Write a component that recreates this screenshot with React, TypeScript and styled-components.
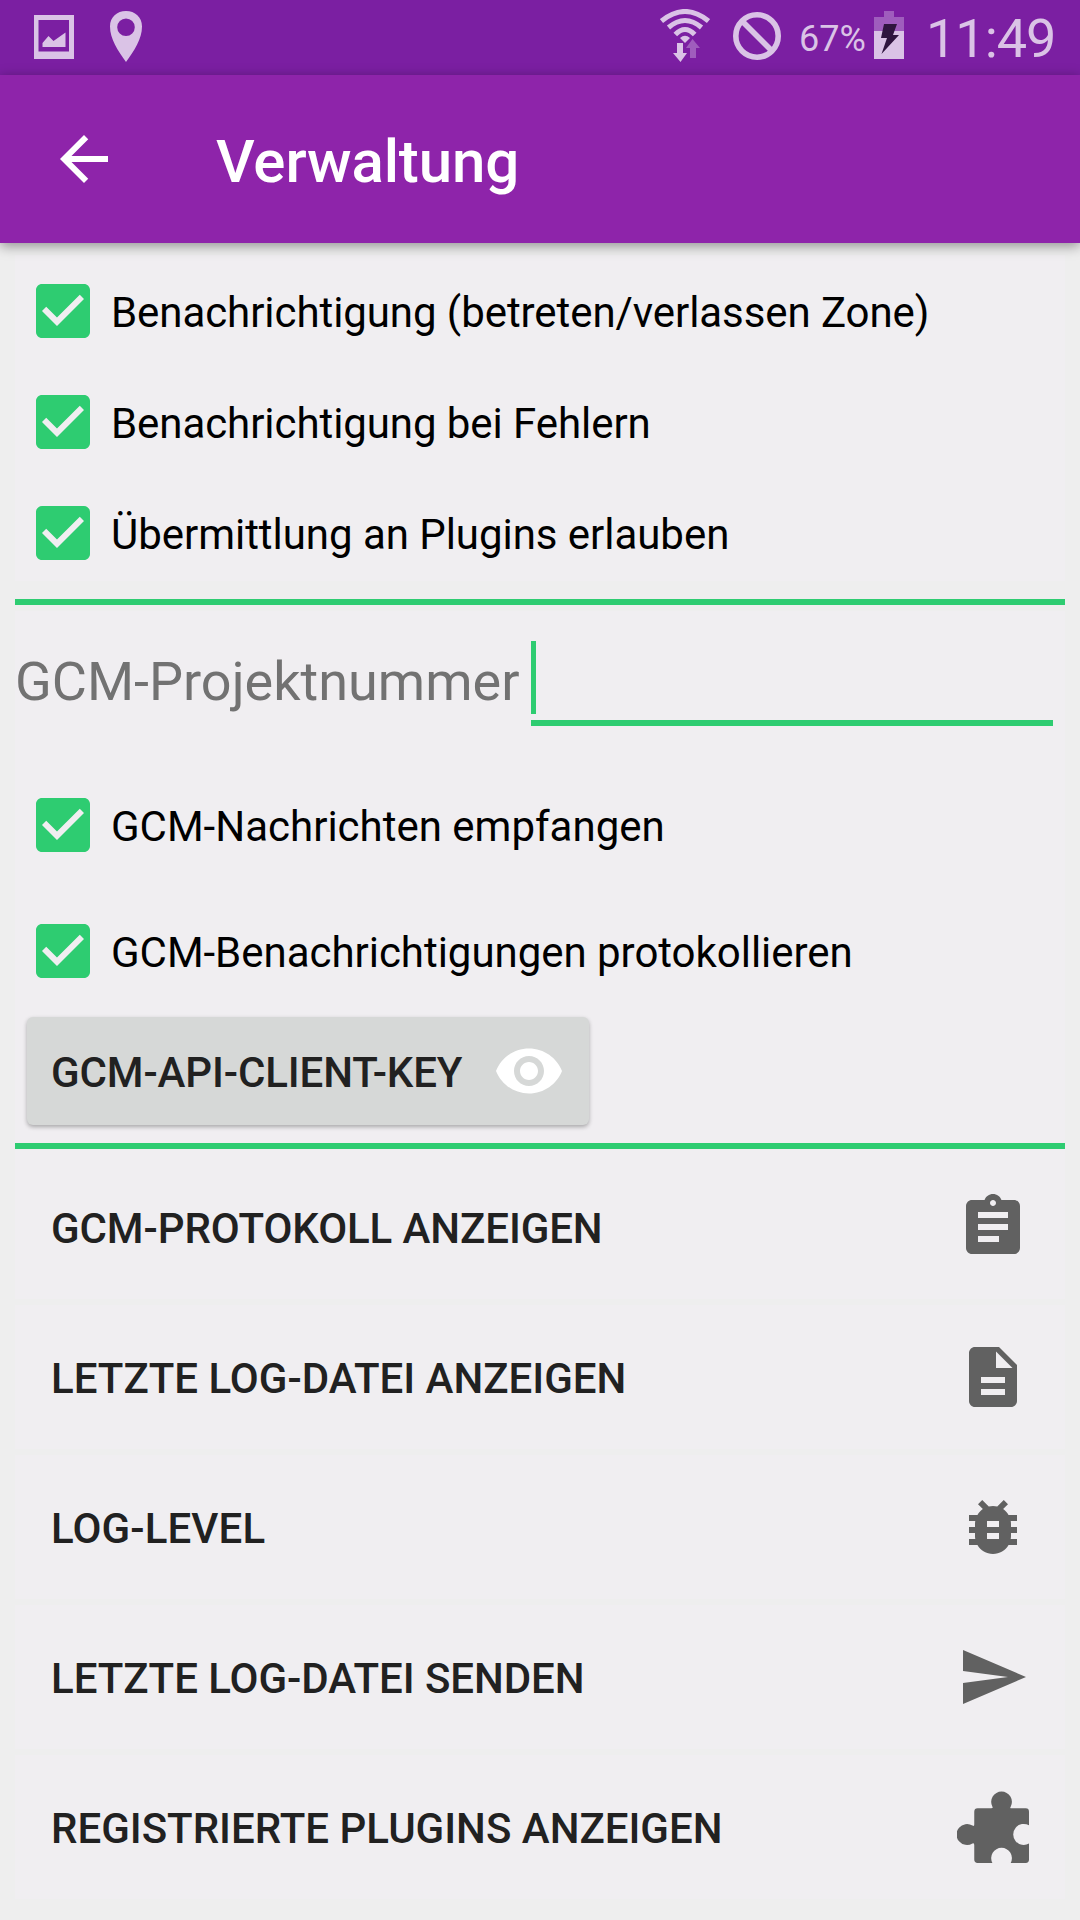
import React, { useState } from "react";
import styled, { createGlobalStyle } from "styled-components";

const GlobalStyle = createGlobalStyle`
  * { box-sizing: border-box; }
  body {
    margin: 0;
    background: #eeeeee;
    font-family: Roboto, "Liberation Sans", sans-serif;
    -webkit-font-smoothing: antialiased;
  }
  button { font-family: inherit; border: 0; padding: 0; margin: 0; cursor: pointer; }
`;

const Screen = styled.div`
  width: 1080px;
  height: 1920px;
  overflow: hidden;
  display: flex;
  flex-direction: column;
  background: #eeeeee;
`;

const StatusBar = styled.header`
  height: 75px;
  flex: none;
  display: flex;
  justify-content: space-between;
  background: #7b1fa2;
  color: #dac3e6;
`;

const StatusGroup = styled.div`
  display: flex;
  align-items: flex-start;
`;

const StatusIcon = styled.svg<{ $left: number; $top: number }>`
  display: block;
  flex: none;
  margin-left: ${(p) => p.$left}px;
  margin-top: ${(p) => p.$top}px;
`;

const StatusText = styled.span<{
  $size: number;
  $left: number;
  $top: number;
  $width: number;
  $tracking?: number;
}>`
  width: ${(p) => p.$width}px;
  margin-left: ${(p) => p.$left}px;
  margin-top: ${(p) => p.$top}px;
  font-size: ${(p) => p.$size}px;
  letter-spacing: ${(p) => p.$tracking ?? 0}px;
  line-height: 1;
  white-space: nowrap;
`;

const AppBar = styled.div`
  height: 168px;
  flex: none;
  display: flex;
  align-items: center;
  padding: 0 48px;
  background: #8e24aa;
  color: #fff;
  position: relative;
  box-shadow: 0 3px 12px rgba(0, 0, 0, 0.4);
`;

const BackButton = styled.button`
  width: 72px;
  height: 72px;
  background: none;
  color: inherit;
`;

const Title = styled.h1`
  margin: 5px 0 0 96px;
  font-size: 60px;
  line-height: 70px;
  font-weight: 500;
  letter-spacing: -0.1px;
`;

const Content = styled.main`
  display: flex;
  flex-direction: column;
  padding: 12px 15px 0;
`;

const Card = styled.section<{ $height: number }>`
  height: ${(p) => p.$height}px;
  display: flex;
  flex-direction: column;
  background: #f0eef1;
`;

const Divider = styled.hr<{ $before: number; $after: number; $tint?: boolean }>`
  width: 100%;
  height: 6px;
  flex: none;
  border: 0;
  margin: ${(p) => p.$before}px 0 ${(p) => p.$after}px;
  background: #2ecc71;
`;

const CheckList = styled.div<{ $top: number; $gap: number }>`
  flex: none;
  display: flex;
  flex-direction: column;
  gap: ${(p) => p.$gap}px;
  padding-top: ${(p) => p.$top}px;
`;

const CheckRow = styled.button`
  height: 72px;
  flex: none;
  display: flex;
  align-items: center;
  padding-left: 12px;
  background: none;
  color: #000;
  text-align: left;
`;

const CheckLabel = styled.span<{ $tracking?: number }>`
  margin: 4px 0 0 12px;
  font-size: 42px;
  line-height: 50px;
  letter-spacing: ${(p) => p.$tracking ?? 0}px;
  white-space: nowrap;
`;

const Icon = styled.svg`
  display: block;
  flex: none;
  width: 72px;
  height: 72px;
  fill: currentColor;
`;

const CheckIcon = styled(Icon)`
  color: #2ecc71;
`;

const FieldRow = styled.label`
  height: 128px;
  flex: none;
  display: flex;
  align-items: flex-start;
  padding: 30px 12px 0 0;
`;

const FieldLabel = styled.span`
  width: 516px;
  flex: none;
  padding-top: 9px;
  font-size: 54px;
  line-height: 64px;
  color: #727272;
  white-space: nowrap;
`;

const Field = styled.div`
  flex: 1;
  height: 85px;
  border-bottom: 6px solid #2ecc71;
`;

const Caret = styled.div`
  width: 5px;
  height: 73px;
  background: #2ecc71;
`;

const KeyButton = styled.button`
  width: 562px;
  height: 108px;
  flex: none;
  margin: 30px 0 0 12px;
  padding: 0 24px;
  display: flex;
  align-items: center;
  justify-content: space-between;
  border-radius: 6px;
  background: #d6d8d7;
  color: #fff;
  box-shadow: 0 2px 4px rgba(0, 0, 0, 0.3);
`;

const ButtonText = styled.span<{ $tracking?: number }>`
  margin-top: 4px;
  font-size: 42px;
  line-height: 50px;
  font-weight: 500;
  letter-spacing: ${(p) => p.$tracking ?? 0}px;
  color: #212121;
  white-space: nowrap;
`;

const Actions = styled.nav`
  display: flex;
  flex-direction: column;
  gap: 6px;
`;

const ActionRow = styled.button<{ $first: boolean }>`
  height: ${(p) => (p.$first ? 150 : 144)}px;
  display: flex;
  align-items: center;
  justify-content: space-between;
  padding: ${(p) => (p.$first ? 6 : 0)}px 36px 0;
  background: #f0eef1;
  color: #616161;
`;

function CheckItem({ label, tracking }: { label: string; tracking?: number }) {
  const [checked, setChecked] = useState(true);
  return (
    <CheckRow role="checkbox" aria-checked={checked} onClick={() => setChecked(!checked)}>
      <CheckIcon viewBox="0 0 24 24">
        {checked ? (
          <path d="M19 3H5c-1.11 0-2 .9-2 2v14c0 1.1.89 2 2 2h14c1.11 0 2-.9 2-2V5c0-1.1-.89-2-2-2zm-9 14l-5-5 1.41-1.41L10 14.17l7.59-7.59L19 8l-9 9z" />
        ) : (
          <path d="M19 5v14H5V5h14m0-2H5c-1.1 0-2 .9-2 2v14c0 1.1.9 2 2 2h14c1.1 0 2-.9 2-2V5c0-1.1-.9-2-2-2z" />
        )}
      </CheckIcon>
      <CheckLabel $tracking={tracking}>{label}</CheckLabel>
    </CheckRow>
  );
}

const actions = [
  {
    label: "GCM-PROTOKOLL ANZEIGEN",
    tracking: -0.09,
    icon: "M19 3h-4.18C14.4 1.84 13.3 1 12 1c-1.3 0-2.4.84-2.82 2H5c-1.1 0-2 .9-2 2v14c0 1.1.9 2 2 2h14c1.1 0 2-.9 2-2V5c0-1.1-.9-2-2-2zm-7 0c.55 0 1 .45 1 1s-.45 1-1 1-1-.45-1-1 .45-1 1-1zm2 14H7v-2h7v2zm3-4H7v-2h10v2zm0-4H7V7h10v2z",
  },
  {
    label: "LETZTE LOG-DATEI ANZEIGEN",
    tracking: 0,
    icon: "M6 2c-1.1 0-2 .9-2 2v16c0 1.1.9 2 2 2h12c1.1 0 2-.9 2-2V8l-6-6H6zM8 12h8v2H8v-2zM8 16h8v2H8v-2zM13 3.5L18.5 9H13V3.5z",
  },
  {
    label: "LOG-LEVEL",
    tracking: 0.12,
    icon: "M20 8h-2.81c-.45-.78-1.07-1.45-1.82-1.96L17 4.41 15.59 3l-2.17 2.17C12.96 5.06 12.49 5 12 5c-.49 0-.96.06-1.41.17L8.41 3 7 4.41l1.62 1.63C7.88 6.55 7.26 7.22 6.81 8H4v2h2.09c-.05.33-.09.66-.09 1v1H4v2h2v1c0 .34.04.67.09 1H4v2h2.81c1.04 1.79 2.97 3 5.19 3s4.15-1.21 5.19-3H20v-2h-2.09c.05-.33.09-.66.09-1v-1h2v-2h-2v-1c0-.34-.04-.67-.09-1H20V8zm-6 8h-4v-2h4v2zm0-4h-4v-2h4v2z",
  },
  { label: "LETZTE LOG-DATEI SENDEN", tracking: -0.04, icon: "M2.01 21L23 12 2.01 3 2 10l15 2-15 2z" },
  {
    label: "REGISTRIERTE PLUGINS ANZEIGEN",
    tracking: 0,
    icon: "M6.9 5.75H11.4Q12.15 5.75 11.8 5.25A3.45 3.45 0 1 1 17.9 5.25Q17.5 5.75 18.2 5.75H22.9Q24 5.75 24 6.9V11.45A3.5 3.5 0 1 0 24 17.5V22.85Q24 24 22.9 24H17.9A3.45 3.45 0 1 0 11.8 24H6.9Q5.75 24 5.75 22.85V18.1Q5.75 17.1 5.15 17.5A3.5 3.5 0 1 1 5.15 11.5Q5.75 11.9 5.75 11.2V6.9Q5.75 5.75 6.9 5.75Z",
  },
];

export default function App() {
  return (
    <>
      <GlobalStyle />
      <Screen>
        <StatusBar>
          <StatusGroup>
            <StatusIcon $left={34} $top={15} width="40" height="44" viewBox="0 0 40 44" fill="currentColor">
              <path fillRule="evenodd" d="M0 0H40V44H0ZM4.5 5V36.5H35V5Z" />
              <path d="M8.5 32V28L14.5 21L19.5 26L31.5 17.5V32Z" />
            </StatusIcon>
            <StatusIcon $left={36} $top={11} width="32" height="51" viewBox="0 0 32 51" fill="currentColor">
              <path fillRule="evenodd" d="M16 0C25 0 32 6 32 15.5C32 28 24 40 16 51C8 40 0 28 0 15.5C0 6 7 0 16 0ZM16 7.5A8.8 8.8 0 1 0 16 25.1A8.8 8.8 0 1 0 16 7.5Z" />
            </StatusIcon>
          </StatusGroup>
          <StatusGroup>
            <StatusIcon $left={0} $top={9} width="50" height="54" viewBox="0 0 50 54" fill="none" stroke="currentColor">
              <path d="M1.5 12Q25 -7 48.5 12" strokeWidth="5" />
              <path d="M8.5 18.5Q25 4.5 41.5 18.5" strokeWidth="5" />
              <path d="M15.3 25.5Q25 15.3 34.7 25.5" strokeWidth="5" />
              <path d="M20 29Q25 24.5 30 29L25 34Z" fill="currentColor" stroke="none" />
              <path d="M17 34H23V44H27L20.5 53L13 44H17Z" fill="currentColor" stroke="none" />
              <path d="M30 49V39H26L32.5 30L40 39H36V49Z" fill="#9f5dbd" stroke="none" />
            </StatusIcon>
            <StatusIcon $left={23} $top={12} width="48" height="48" viewBox="0 0 48 48" fill="none" stroke="currentColor" strokeWidth="5.6">
              <circle cx="24" cy="24" r="21.2" />
              <path d="M9 9L39 39" />
            </StatusIcon>
            <StatusText $size={36} $left={18} $top={21} $width={75}>67%</StatusText>
            <StatusIcon $left={0} $top={11} width="30" height="48" viewBox="0 0 30 48">
              <path d="M10 0H20V6H30V20H0V6H10Z" fill="#9f5dbd" />
              <path d="M0 20H30V48H0Z" fill="currentColor" />
              <path d="M10 13H23L19 24H25L7.5 43L13 27H7Z" fill="#2f153f" />
            </StatusIcon>
            <StatusText $size={54} $left={22} $top={12} $width={154} $tracking={-1}>11:49</StatusText>
          </StatusGroup>
        </StatusBar>
        <AppBar>
          <BackButton aria-label="Zurück">
            <Icon viewBox="0 0 24 24">
              <path d="M20 11H7.83l5.59-5.59L12 4l-8 8 8 8 1.41-1.41L7.83 13H20v-2z" />
            </Icon>
          </BackButton>
          <Title>Verwaltung</Title>
        </AppBar>
        <Content>
          <Card $height={326}>
            <CheckList $top={20} $gap={39}>
              <CheckItem label="Benachrichtigung (betreten/verlassen Zone)" tracking={-0.07} />
              <CheckItem label="Benachrichtigung bei Fehlern" tracking={-0.07} />
              <CheckItem label="Übermittlung an Plugins erlauben" tracking={-0.04} />
            </CheckList>
          </Card>
          <Divider $before={18} $after={6} />
          <Card $height={532}>
            <FieldRow>
              <FieldLabel>GCM-Projektnummer</FieldLabel>
              <Field>
                <Caret />
              </Field>
            </FieldRow>
            <CheckList $top={50} $gap={54}>
              <CheckItem label="GCM-Nachrichten empfangen" />
              <CheckItem label="GCM-Benachrichtigungen protokollieren" tracking={-0.03} />
            </CheckList>
            <KeyButton>
              <ButtonText $tracking={-0.12}>GCM-API-CLIENT-KEY</ButtonText>
              <Icon viewBox="0 0 24 24">
                <path d="M12 4.5C7 4.5 2.73 7.61 1 12c1.73 4.39 6 7.5 11 7.5s9.27-3.11 11-7.5c-1.73-4.39-6-7.5-11-7.5zM12 17c-2.76 0-5-2.24-5-5s2.24-5 5-5 5 2.24 5 5-2.24 5-5 5zm0-8c-1.66 0-3 1.34-3 3s1.34 3 3 3 3-1.34 3-3-1.34-3-3-3z" />
              </Icon>
            </KeyButton>
          </Card>
          <Divider $before={0} $after={0} />
          <Actions>
            {actions.map((a, i) => (
              <ActionRow key={a.label} $first={i === 0}>
                <ButtonText $tracking={a.tracking}>{a.label}</ButtonText>
                <Icon viewBox="0 0 24 24">
                  <path d={a.icon} />
                </Icon>
              </ActionRow>
            ))}
          </Actions>
        </Content>
      </Screen>
    </>
  );
}
